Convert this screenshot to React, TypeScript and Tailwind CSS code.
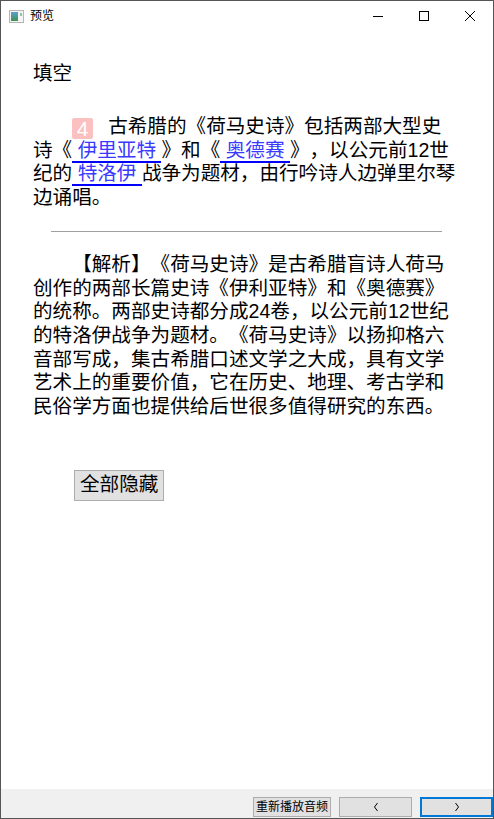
import React from "react";

const cjk = { fontFamily: '"Liberation Sans", "Noto Sans CJK SC", sans-serif' };

function U({ children }: { children: React.ReactNode }) {
  return (
    <span className="border-b-2 border-[#0000ff] text-[#3a3aff]">
      {"\u00a0"}
      {children}
      {"\u00a0"}
    </span>
  );
}

export default function App() {
  return (
    <div
      className="w-[494px] h-[819px] border border-[#555555] bg-white flex flex-col overflow-hidden text-black [text-spacing-trim:space-all]"
      style={cjk}
    >
      {/* Title bar */}
      <div className="h-[30px] flex items-center shrink-0">
        <div className="w-[15px] h-[13px] ml-[8px] border border-[#b5b5b5] bg-[#f4f4f4] flex p-[1px]">
          <div className="w-[7px] h-full bg-gradient-to-b from-[#5a9fd0] to-[#3f8f4f]" />
          <div className="flex-1 flex flex-col items-end pt-[1px]">
            <div className="w-[2px] h-[3px] bg-[#8fc4a0]" />
          </div>
        </div>
        <div className="ml-[6px] text-[12px] leading-none">预览</div>
        <div className="ml-auto flex h-full">
          <div className="w-[46px] h-full flex items-center justify-center">
            <svg width="10" height="10" viewBox="0 0 10 10">
              <line x1="0" y1="5.5" x2="10" y2="5.5" stroke="#000" strokeWidth="1" />
            </svg>
          </div>
          <div className="w-[46px] h-full flex items-center justify-center">
            <svg width="10" height="10" viewBox="0 0 10 10">
              <rect x="0.5" y="0.5" width="9" height="9" fill="none" stroke="#000" strokeWidth="1" />
            </svg>
          </div>
          <div className="w-[46px] h-full flex items-center justify-center">
            <svg width="10" height="10" viewBox="0 0 10 10">
              <line x1="0" y1="0" x2="10" y2="10" stroke="#000" strokeWidth="1" />
              <line x1="10" y1="0" x2="0" y2="10" stroke="#000" strokeWidth="1" />
            </svg>
          </div>
        </div>
      </div>

      {/* Content */}
      <div className="flex-1 pl-[32px] pt-[31px]">
        <div className="w-[427px] text-[19.6px] leading-[23.7px] text-black">
          <p>填空</p>
          <p className="mt-[29px] indent-[2em]">
            <span className="inline-block indent-0 w-[21px] h-[21px] rounded-[2px] bg-[#fbc0c0] text-white text-center leading-[21px] text-[21px] align-[-3px] mr-[15px]">
              4
            </span>
            古希腊的《荷马史诗》包括两部大型史诗《<U>伊里亚特</U>》和《<U>奥德赛</U>》，以公元前12世纪的<U>特洛伊</U>战争为题材，由行吟诗人边弹里尔琴边诵唱。
          </p>
          <div className="mt-[21px] mx-[18px] h-[1px] bg-[#a0a0a0]" />
          <p className="mt-[21px] indent-[2em]">
            【解析】《荷马史诗》是古希腊盲诗人荷马创作的两部长篇史诗《伊利亚特》和《奥德赛》的统称。两部史诗都分成24卷，以公元前12世纪的特洛伊战争为题材。《荷马史诗》以扬抑格六音部写成，集古希腊口述文学之大成，具有文学艺术上的重要价值，它在历史、地理、考古学和民俗学方面也提供给后世很多值得研究的东西。
          </p>
          <div className="mt-[51px] pl-[41px]">
            <button
              className="h-[31px] px-[5px] border border-[#adadad] bg-[#e1e1e1] text-[19.6px] leading-none"
              style={cjk}
            >
              全部隐藏
            </button>
          </div>
        </div>
      </div>

      {/* Bottom bar */}
      <div className="h-[29px] shrink-0 bg-[#f0f0f0] flex items-end justify-end gap-[8px] pb-[1px]">
        <button
          className="h-[20px] w-[78px] border border-[#adadad] bg-[#e1e1e1] text-[12px] leading-none flex items-center justify-center"
          style={cjk}
        >
          重新播放音频
        </button>
        <button className="h-[20px] w-[73px] border border-[#adadad] bg-[#e1e1e1] flex items-center justify-center">
          <svg width="8" height="10" viewBox="0 0 8 10">
            <polyline points="5.5,1 2.5,5 5.5,9" fill="none" stroke="#000" strokeWidth="1" />
          </svg>
        </button>
        <button className="h-[20px] w-[73px] border-2 border-[#0078d7] bg-[#e1e1e1] flex items-center justify-center">
          <svg width="8" height="10" viewBox="0 0 8 10">
            <polyline points="2.5,1 5.5,5 2.5,9" fill="none" stroke="#000" strokeWidth="1" />
          </svg>
        </button>
      </div>
    </div>
  );
}
